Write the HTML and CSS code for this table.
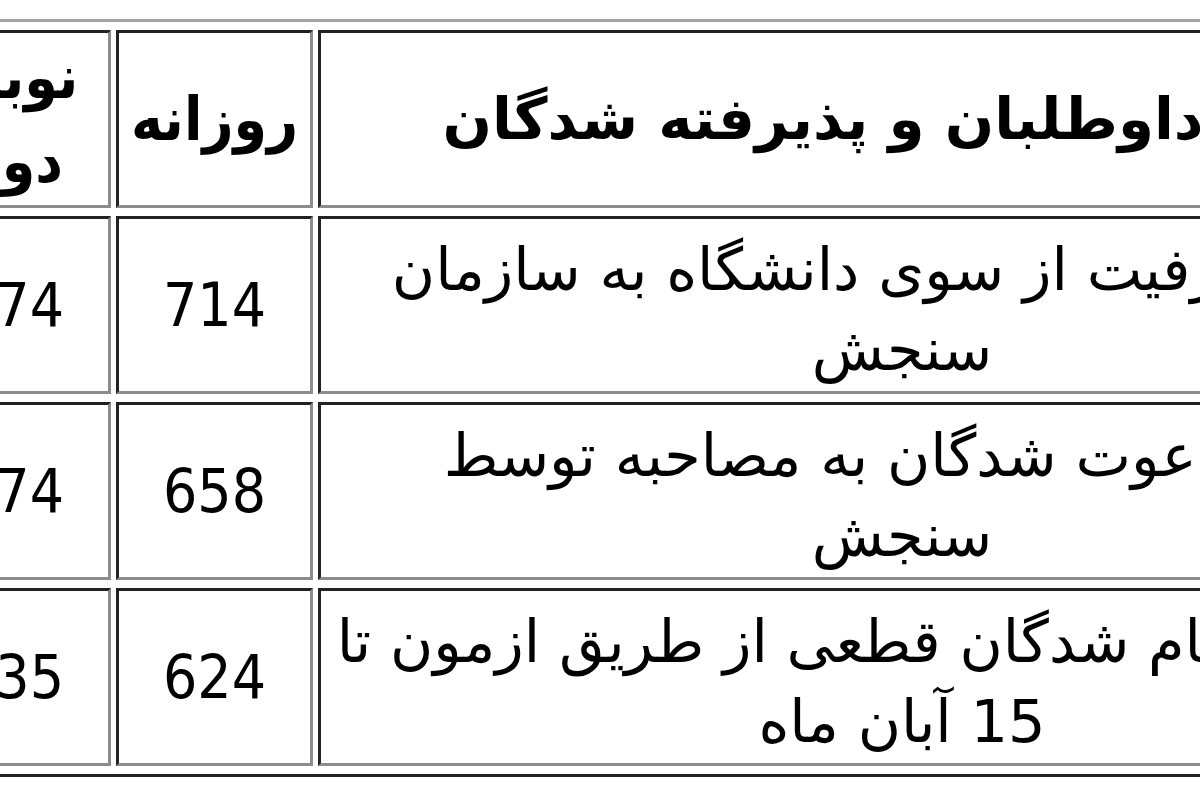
FILE: index.html
```html
<!DOCTYPE html>
<html lang="fa">
<head>
<meta charset="utf-8">
<title>جدول داوطلبان</title>
<link rel="stylesheet" href="styles.css">
</head>
<body>
<div class="viewport">
  <table class="stats">
    <tr class="head">
      <td class="col-label">تعداد داوطلبان و پذیرفته شدگان</td>
      <td class="col-num">روزانه</td>
      <td class="col-num">نوبت<br>دوم</td>
    </tr>
    <tr>
      <td class="col-label">اعلام ظرفیت از سوی دانشگاه به سازمان<br>سنجش</td>
      <td class="col-num">714</td>
      <td class="col-num">374</td>
    </tr>
    <tr>
      <td class="col-label">تعداد دعوت شدگان به مصاحبه توسط<br>سنجش</td>
      <td class="col-num">658</td>
      <td class="col-num">374</td>
    </tr>
    <tr>
      <td class="col-label">تعداد ثبت نام شدگان قطعی از طریق ازمون تا<br>15 آبان ماه</td>
      <td class="col-num">624</td>
      <td class="col-num">235</td>
    </tr>
  </table>
</div>
</body>
</html>
```

FILE: styles.css
```css
html, body {
  margin: 0;
  padding: 0;
  background: #ffffff;
}

.viewport {
  width: 1200px;
  height: 800px;
  overflow: hidden;
  padding-top: 19px;
  box-sizing: border-box;
}

.stats {
  direction: rtl;
  table-layout: fixed;
  width: 1588px;
  margin-left: -94px;
  border-collapse: separate;
  border-spacing: 5px 8px;
  border-style: solid;
  border-width: 3px;
  border-color: #a3a3a3 #222222 #222222 #a3a3a3;
  font-family: "DejaVu Sans Condensed", "DejaVu Sans", sans-serif;
  font-size: 60px;
  line-height: 80px;
  color: #000000;
}

.stats td {
  box-sizing: border-box;
  height: 178px;
  padding: 0;
  text-align: center;
  vertical-align: middle;
  border-style: solid;
  border-width: 3px;
  border-color: #222222 #8c8c8c #8c8c8c #222222;
  white-space: nowrap;
  overflow: hidden;
}

.stats .col-label {
  width: 1168px;
  font-family: "DejaVu Sans", sans-serif;
  font-size: 59px;
}

.stats .head .col-label {
  font-size: 58px;
}

.stats tr + tr .col-label {
  padding-top: 10px;
}

.stats .col-num {
  width: 197px;
}

.head td {
  font-weight: bold;
  line-height: 84px;
}
```
